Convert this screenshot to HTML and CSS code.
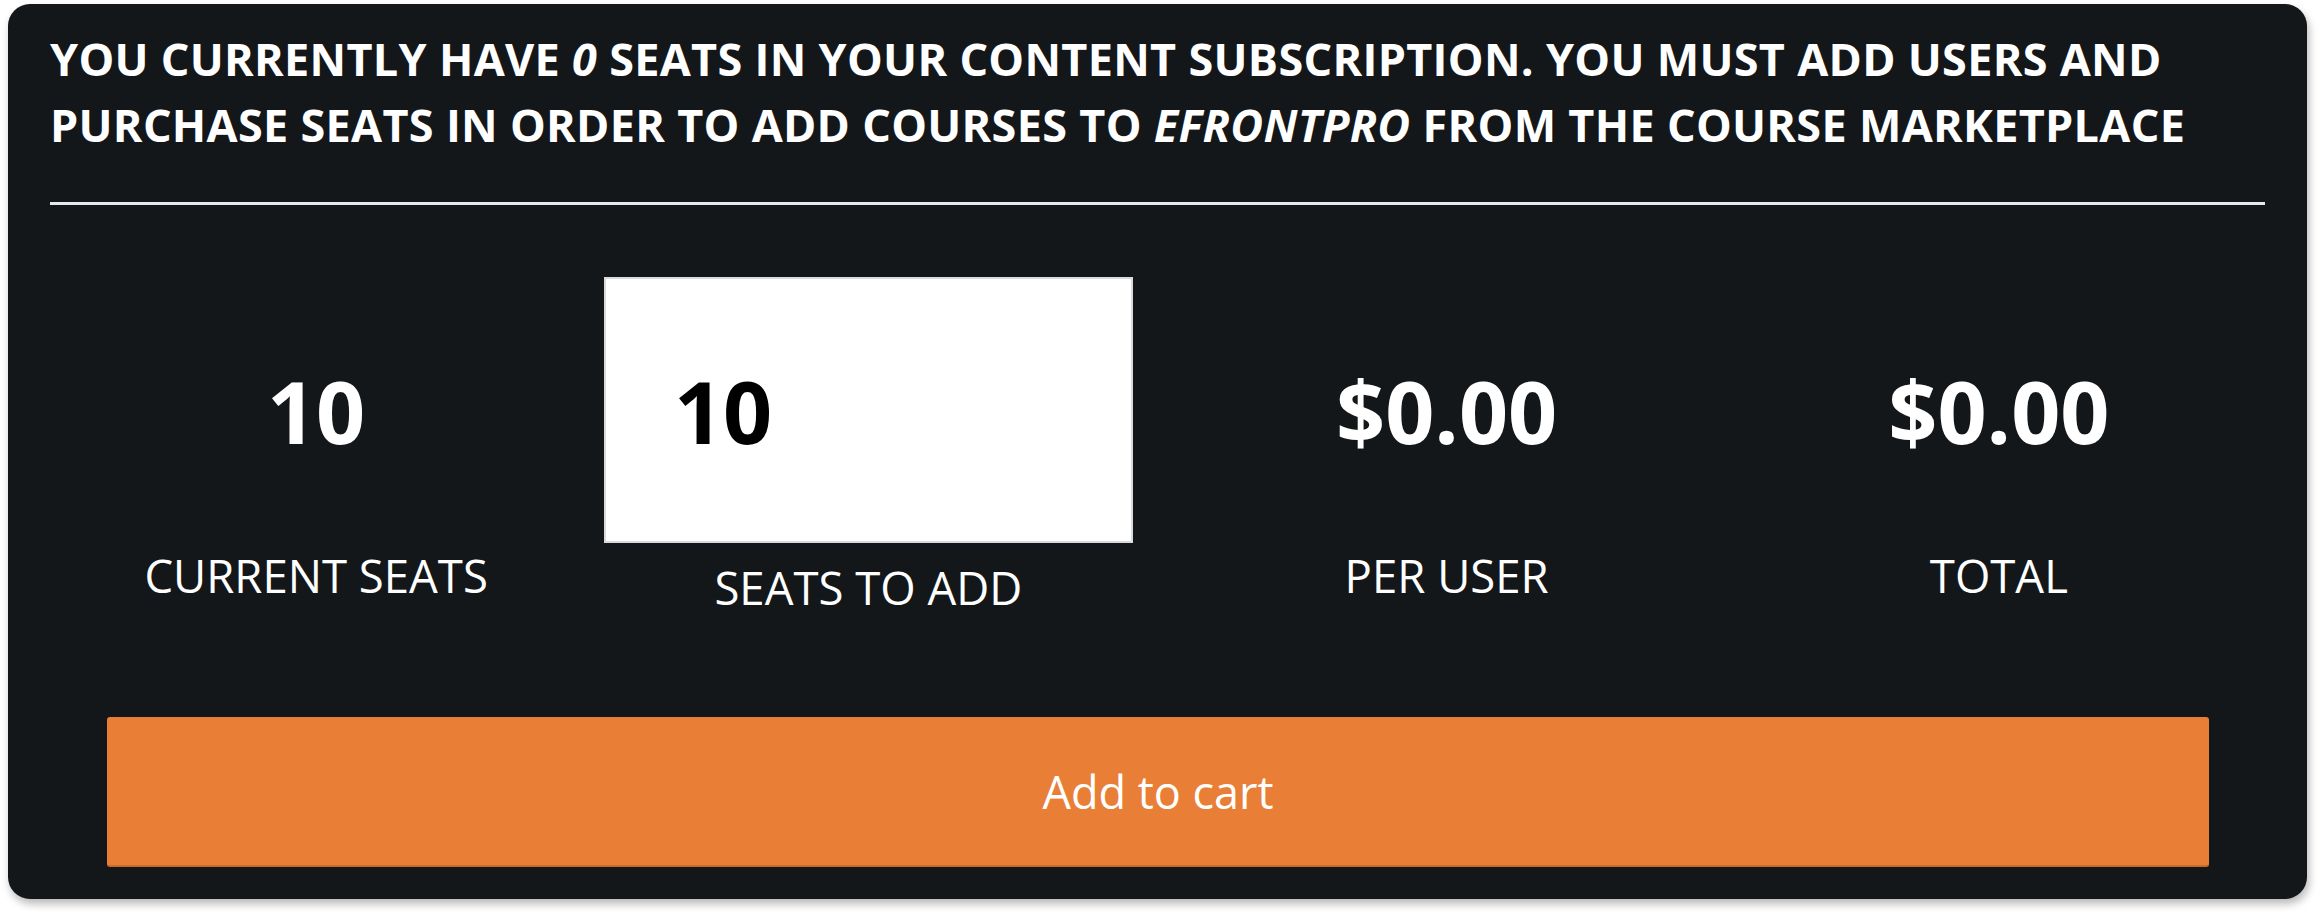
FILE: index.html
```html
<!DOCTYPE html>
<html lang="en">
<head>
  <meta charset="UTF-8">
  <title>Content subscription seats</title>
  <link rel="stylesheet" href="styles.css">
</head>
<body>

<!-- seats panel -->
<section class="seats-card">
  <h2 class="seats-title">
    You currently have <em>0</em> seats in your content subscription. You must add users and
    purchase seats in order to add courses to <em>eFrontPro</em> from the course marketplace
  </h2>
  <hr class="seats-divider">

  <div class="stats">
    <div class="stat-pair">
      <div class="stat">
        <div class="stat-value">10</div>
        <div class="stat-label">Current seats</div>
      </div>
      <div class="stat stat-edit">
        <div class="stat-value">
          <input class="seats-input" type="text" value="10">
        </div>
        <div class="stat-label">Seats to add</div>
      </div>
    </div>
    <div class="stat-pair">
      <div class="stat">
        <div class="stat-value">$0.00</div>
        <div class="stat-label">Per user</div>
      </div>
      <div class="stat">
        <div class="stat-value">$0.00</div>
        <div class="stat-label">Total</div>
      </div>
    </div>
  </div>

  <button class="cart-btn" type="button">Add to cart</button>
</section>

</body>
</html>
```

FILE: styles.css
```css
body {
  margin: 0;
  padding: 4px 17px 20px 8px;
  background: #fff;
  font-family: "Open Sans", "Liberation Sans", sans-serif;
}

.seats-card {
  background: #14171a;
  color: #fff;
  border-radius: 22px;
  padding: 22px 42px 32px;
  box-shadow: 2px 5px 9px rgba(0,0,0,0.28);
}

.seats-title {
  margin: 0;
  font-size: 45px;
  line-height: 66px;
  letter-spacing: 0.3px;
  font-weight: 700;
  text-transform: uppercase;
}
.seats-title em { font-style: italic; }

.seats-divider {
  margin: 44px 0 0;
  border: 0;
  border-top: 3px solid #e8e8e8;
}

.stats {
  margin: 72px -10px 0;
  display: grid;
  grid-template-columns: 1fr 1fr;
  column-gap: 26px;
}
.stat-pair {
  display: grid;
  grid-template-columns: 1fr 1fr;
}
.stat {
  display: flex;
  flex-direction: column;
  align-items: center;
}
.stat-value {
  height: 266px;
  display: flex;
  align-items: center;
  justify-content: center;
  font-size: 86px;
  font-weight: 700;
}
.stat-label {
  margin-top: 1px;
  font-size: 45.5px;
  text-transform: uppercase;
}
.stat-edit .stat-label { margin-top: 13px; }

.seats-input {
  box-sizing: border-box;
  width: 529px;
  height: 266px;
  padding: 0 64px 0 68px;
  border: 2px solid #dadada;
  border-radius: 0;
  background: #fff;
  color: #000;
  font-family: inherit;
  font-size: 86px;
  font-weight: 700;
}

.cart-btn {
  display: block;
  width: calc(100% - 113px);
  height: 150px;
  margin: 99px 56px 0 57px;
  border: 0;
  border-bottom: 2px solid #c96a2b;
  border-radius: 3px;
  background: #e97f37;
  color: #fff;
  font-family: inherit;
  font-size: 45px;
}
```
